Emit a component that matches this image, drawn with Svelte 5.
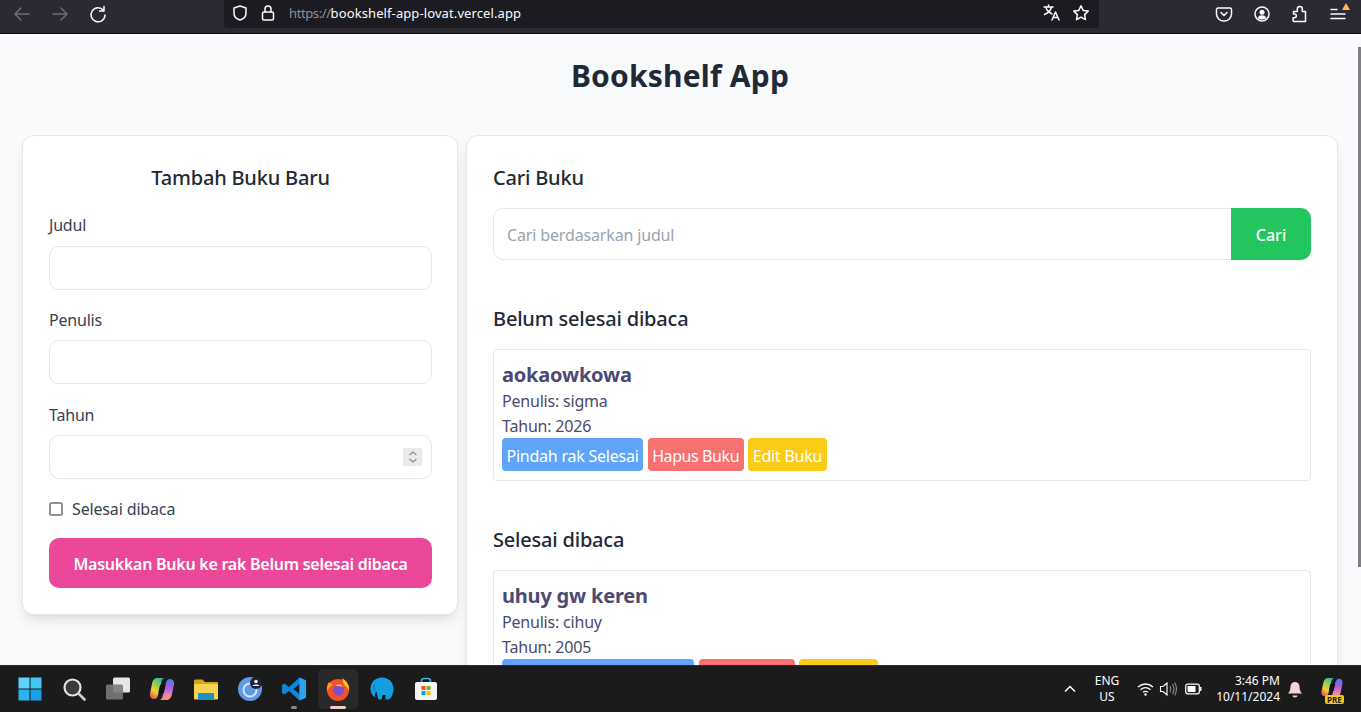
<script>
	const unread = [{ title: "aokaowkowa", author: "sigma", year: 2026, move: "Pindah rak Selesai" }];
	const done = [{ title: "uhuy gw keren", author: "cihuy", year: 2005, move: "Pindah rak Belum Selesai" }];
	const shelves = [
		{ name: "Belum selesai dibaca", books: unread },
		{ name: "Selesai dibaca", books: done },
	];
</script>

<div class="screen">
	<header class="chrome">
		<div class="nav">
			<svg class="dim" width="20" height="20" viewBox="0 0 20 20"><path d="M17 10H3M9 4l-6 6 6 6" /></svg>
			<svg class="dim" width="20" height="20" viewBox="0 0 20 20"><path d="M3 10h14M11 4l6 6-6 6" /></svg>
			<svg width="20" height="20" viewBox="0 0 20 20"><path d="M15.500 6.500A7 7 0 1 0 17 11M16 2.500v4.500h-4.500" /></svg>
		</div>
		<div class="urlbar">
			<svg width="18" height="18" viewBox="0 0 18 18"><path d="M9 2l6 2v5c0 3.500-2.500 6-6 7-3.500-1-6-3.500-6-7V4z" /></svg>
			<svg width="18" height="18" viewBox="0 0 18 18"><rect x="3.500" y="8" width="11" height="8" rx="1.500" /><path d="M6 8V5a3 3 0 0 1 6 0v3" /></svg>
			<span class="url"><span class="scheme">https://</span>bookshelf-app-lovat.vercel.app</span>
			<span class="spacer"></span>
			<svg width="20" height="20" viewBox="0 0 20 20"><path d="M2 4h9M6.500 2v2M9.500 4c-.8 3.500-3.200 6-7 7.500M4 5c1 2.500 3 4.500 6 6M10 17l3.500-8 3.500 8M11.200 14.500h4.600" /></svg>
			<svg width="18" height="18" viewBox="0 0 18 18"><path d="M9 1.800l2.200 4.600 5 .7-3.600 3.500.9 5L9 13.200l-4.500 2.400.9-5L1.800 7.100l5-.7z" /></svg>
		</div>
		<div class="tools">
			<svg width="18" height="18" viewBox="0 0 18 18"><path d="M3 3h12a1.500 1.500 0 0 1 1.500 1.500V9a7.500 7 0 0 1-15 0V4.500A1.500 1.500 0 0 1 3 3z" /><path d="M6 7.500l3 3 3-3" /></svg>
			<svg width="18" height="18" viewBox="0 0 18 18"><circle cx="9" cy="9" r="7" /><circle class="solid" cx="9" cy="7.300" r="2.500" /><path class="solid" d="M4.500 13c1-2 2.500-2.700 4.500-2.700s3.500.7 4.500 2.700c-2.500 2-6.500 2-9 0z" /></svg>
			<svg width="18" height="18" viewBox="0 0 18 18"><path d="M2.500 6.500h3.800V4a2.500 2.500 0 0 1 5 0v2.500h3.200V16.500H3a1 1 0 0 1-.9-1v-2.800h1.400a1.800 1.800 0 0 0 0-3.700H2.500z" /></svg>
			<span class="menu">
				<svg width="18" height="18" viewBox="0 0 18 18"><path d="M2 4.500h6M2 9h14M2 13.500h14" /></svg>
				<i class="badge"></i>
			</span>
		</div>
	</header>

	<div class="viewport">
		<h1>Bookshelf App</h1>
		<div class="layout">
			<section class="card form">
				<h2>Tambah Buku Baru</h2>
				<div class="field"><label for="judul">Judul</label><input id="judul" type="text" /></div>
				<div class="field"><label for="penulis">Penulis</label><input id="penulis" type="text" /></div>
				<div class="field year">
					<label for="tahun">Tahun</label>
					<div class="number">
						<input id="tahun" type="text" />
						<span class="spin">
							<svg width="10" height="14" viewBox="0 0 10 14"><path d="M1.500 5L5 2l3.500 3M1.500 9L5 12l3.500-3" /></svg>
						</span>
					</div>
				</div>
				<div class="check"><span class="box"></span><span>Selesai dibaca</span></div>
				<button class="submit">Masukkan Buku ke rak Belum selesai dibaca</button>
			</section>

			<section class="card shelves">
				<h2>Cari Buku</h2>
				<div class="search">
					<input type="text" placeholder="Cari berdasarkan judul" />
					<button>Cari</button>
				</div>
				{#each shelves as shelf}
					<h2 class="shelf-name">{shelf.name}</h2>
					{#each shelf.books as book}
						<article class="book">
							<h3>{book.title}</h3>
							<p>Penulis: {book.author}</p>
							<p>Tahun: {book.year}</p>
							<div class="actions">
								<button class="blue">{book.move}</button>
								<button class="red">Hapus Buku</button>
								<button class="yellow">Edit Buku</button>
							</div>
						</article>
					{/each}
				{/each}
			</section>
		</div>
		<div class="scrollbar"></div>
	</div>

	<footer class="taskbar">
		<svg class="defs" width="0" height="0">
			<defs>
				<linearGradient id="cop-a" x1="0.700" y1="0" x2="0.200" y2="1">
					<stop offset="0" stop-color="#2fb6a8" /><stop offset=".35" stop-color="#8fd14f" /><stop offset=".65" stop-color="#f5cf3a" /><stop offset="1" stop-color="#e8505a" />
				</linearGradient>
				<linearGradient id="cop-b" x1="0.500" y1="0" x2="0.600" y2="1">
					<stop offset="0" stop-color="#3f7fe8" /><stop offset=".45" stop-color="#b05ce0" /><stop offset=".8" stop-color="#f08aa8" /><stop offset="1" stop-color="#f59a3c" />
				</linearGradient>
			</defs>
		</svg>
		<div class="apps">
			<span class="app"><svg width="24" height="24" viewBox="0 0 24 24">
				<rect x="0.500" y="0.500" width="11" height="11" fill="#5fd3fb" /><rect x="12.500" y="0.500" width="11" height="11" fill="#45c4f6" />
				<rect x="0.500" y="12.500" width="11" height="11" fill="#2cb2f0" /><rect x="12.500" y="12.500" width="11" height="11" fill="#1a9fe8" /></svg></span>
			<span class="app"><svg width="24" height="24" viewBox="0 0 24 24"><circle cx="10.500" cy="10.500" r="8" fill="#3a3a3a" stroke="#e4e4e4" stroke-width="2.200" /><path d="M16.500 16.500l6 6" stroke="#cfcfcf" stroke-width="2.600" stroke-linecap="round" /></svg></span>
			<span class="app"><svg width="26" height="24" viewBox="0 0 26 24"><rect x="8" y="0.500" width="17" height="15" rx="1.500" fill="#e6e6e6" /><rect x="1" y="7.500" width="17" height="15" rx="1.500" fill="#7a7a7a" opacity=".9" /></svg></span>
			<span class="app"><svg width="26" height="24" viewBox="0 0 26 24">
				<path d="M8 1h8c-2 0-3 1.500-3.500 3.500L9 18c-.5 2.500-2 4-4 4-3 0-4.500-2.500-4-5.500L3 7c.6-3.500 2.500-6 5-6z" fill="url(#cop-a)" /><path d="M18 23h-8c2 0 3-1.500 3.500-3.500L17 6c.5-2.500 2-4 4-4 3 0 4.500 2.500 4 5.500L23 17c-.6 3.500-2.500 6-5 6z" fill="url(#cop-b)" /><path d="M11 8h5.500l-1.700 8H9.300z" fill="#111" /></svg></span>
			<span class="app"><svg width="24" height="24" viewBox="0 0 24 24">
				<path d="M0 4a1.500 1.500 0 0 1 1.500-1.500h7L11 5h13v17H0z" fill="#d6a514" /><rect x="0" y="7" width="24" height="15.500" rx="1" fill="#f7d352" /><rect x="4" y="16" width="16" height="6.500" fill="#1d8fc9" /></svg></span>
			<span class="app"><svg width="26" height="26" viewBox="0 0 26 26">
				<circle cx="13" cy="13" r="12" fill="#5f9be6" /><circle cx="13" cy="14" r="6.500" fill="none" stroke="#d4e6fb" stroke-width="2" /><circle cx="19" cy="7" r="6" fill="#1c2333" /><circle cx="19" cy="5.500" r="1.800" fill="#eee" /><path d="M15.500 10c.5-2 6.500-2 7 0z" fill="#eee" /></svg></span>
			<span class="app"><svg width="24" height="24" viewBox="0 0 24 24">
				<path d="M17.500.5L24 3.500v17l-6.500 3L7 14l-4.500 3.500L0 16V8l2.500-1.500L7 10zM17.500 7L11.500 12l6 5z" fill="#0f86d8" /><path d="M17.500.5L24 3.500v17l-6.500 3z" fill="#2aa5f0" /></svg>
				<i class="dot"></i></span>
			<span class="app active"><svg width="24" height="24" viewBox="0 0 24 24">
				<circle cx="12" cy="13" r="11" fill="#f4502a" /><path d="M16 1c5 3 8 8 7 13-1-3-3-5-5-6-1-3-1-5-2-7z" fill="#ffbd2e" /><path d="M3 5c-2 3-2.500 6-2 9 2-3 3-5 6-6z" fill="#ff9a25" /><circle cx="12.500" cy="13" r="5.500" fill="#7a4fd0" /><path d="M9 9c3-3 7-2 8 1-2-1-5-1-8-1z" fill="#ffb52b" /></svg>
				<i class="dash"></i></span>
			<span class="app"><svg width="24" height="24" viewBox="0 0 24 24">
				<path d="M12 .5c7 0 11.500 5 11.500 11.500 0 4.500-1.800 8.500-4.500 10.500h-3.500V18h-3l-1 4.500H8.500C7.200 20 7.500 17 6.300 14.500 5 16 4.800 18 5.200 20.500 2 18.500.5 15.500.5 12 .5 5.500 5 .5 12 .5z" fill="#14a0e0" /><path d="M5 7c-1.500 2-1.500 5 .5 7" fill="none" stroke="#0d6ea3" stroke-width="1" /></svg></span>
			<span class="app"><svg width="24" height="24" viewBox="0 0 24 24">
				<path d="M7.500 6V4a2.500 2.500 0 0 1 2.500-2.500h4A2.500 2.500 0 0 1 16.500 4v2" fill="none" stroke="#2fb4ee" stroke-width="1.600" /><rect x="1" y="5" width="22" height="18" rx="2" fill="#f4f4f4" />
				<rect x="7.500" y="9" width="4" height="4" fill="#f25022" /><rect x="12.500" y="9" width="4" height="4" fill="#7fba00" /><rect x="7.500" y="14" width="4" height="4" fill="#00a4ef" /><rect x="12.500" y="14" width="4" height="4" fill="#ffb900" /></svg></span>
		</div>
		<div class="tray">
			<svg class="t-chev" width="14" height="14" viewBox="0 0 14 14"><path d="M2 9.500L7 4.500l5 5" /></svg>
			<div class="lang"><span>ENG</span><span>US</span></div>
			<svg class="t-wifi" width="17" height="14" viewBox="0 0 17 14"><path d="M1 5c4.500-4 10.500-4 15 0M3.500 7.800c3-2.600 7-2.600 10 0M6 10.300c1.500-1.200 3.500-1.200 5 0" /><circle class="fill" cx="8.500" cy="12.500" r="1.200" /></svg>
			<svg class="t-vol" width="18" height="16" viewBox="0 0 18 16"><path d="M1.500 5.500h2.500L8 2v12l-4-3.500H1.500z" /><path class="faint" d="M11 5c1 2 1 4 0 6M13.500 3c1.700 3 1.700 7 0 10M15.800 1.500c2 4 2 9 0 13" /></svg>
			<svg class="t-bat" width="17" height="12" viewBox="0 0 17 12"><rect x="0.700" y="1.200" width="13.600" height="9.600" rx="2" /><rect class="fill" x="2.500" y="3" width="8" height="6" rx=".5" /><rect class="fill" x="15" y="4" width="1.500" height="4" /></svg>
			<div class="clock"><span>3:46 PM</span><span>10/11/2024</span></div>
			<svg class="t-bell" width="16" height="17" viewBox="0 0 16 17"><path d="M8 1a4.500 4.500 0 0 1 4.500 4.500c0 3 .8 5 2.500 7H1c1.700-2 2.500-4 2.500-7A4.500 4.500 0 0 1 8 1z" fill="#f6d4d4" /><path d="M5.500 14.500h5a2.500 2 0 0 1-5 0z" fill="#f6d4d4" /></svg>
			<span class="t-copilot">
				<svg width="24" height="21" viewBox="0 0 26 24">
					<path d="M8 1h8c-2 0-3 1.500-3.500 3.500L9 18c-.5 2.500-2 4-4 4-3 0-4.500-2.500-4-5.500L3 7c.6-3.500 2.500-6 5-6z" fill="url(#cop-a)" /><path d="M18 23h-8c2 0 3-1.500 3.500-3.500L17 6c.5-2.500 2-4 4-4 3 0 4.500 2.500 4 5.500L23 17c-.6 3.500-2.500 6-5 6z" fill="url(#cop-b)" /><path d="M11 8h5.500l-1.700 8H9.300z" fill="#111" /></svg>
				<b>PRE</b>
			</span>
		</div>
	</footer>
</div>

<style>
	:global(body) {
		margin: 0;
		overflow: hidden;
	}

	* {
		box-sizing: border-box;
	}

	.screen {
		width: 1361px;
		height: 712px;
		display: flex;
		flex-direction: column;
		overflow: hidden;
		font-family: "Noto Sans", "Open Sans", sans-serif;
	}

	/* browser toolbar */
	.chrome {
		height: 34px;
		flex: none;
		display: flex;
		align-items: flex-start;
		background: #2b2a33;
		border-bottom: 1px solid #0c0c0d;
		color: #fbfbfe;
	}

	.chrome svg {
		fill: none;
		stroke: #fbfbfe;
		stroke-width: 1.500;
		stroke-linejoin: round;
		stroke-linecap: round;
		flex: none;
	}

	.chrome svg .solid {
		fill: #fbfbfe;
		stroke: none;
	}

	.chrome svg.dim {
		stroke: #6e6d75;
	}

	.nav {
		width: 224px;
		height: 27px;
		padding-left: 12px;
		display: flex;
		align-items: center;
		gap: 18px;
	}

	.urlbar {
		width: 875px;
		height: 28px;
		padding: 0 9px 2px 7px;
		display: flex;
		align-items: center;
		gap: 10px;
		background: #1c1b22;
		border-radius: 0 0 4px 4px;
	}

	.url {
		margin-left: 2px;
		font-size: 13px;
		letter-spacing: 0.1px;
		color: #fbfbfe;
	}

	.scheme {
		letter-spacing: -0.4px;
		color: #8f8f9d;
	}

	.spacer {
		flex: 1;
	}

	.tools {
		flex: 1;
		height: 27px;
		padding: 0 14px 0 116px;
		display: flex;
		align-items: center;
		justify-content: space-between;
	}

	.menu {
		position: relative;
		display: flex;
	}

	.badge {
		position: absolute;
		top: -2px;
		right: -3px;
		width: 0;
		height: 0;
		border-left: 4px solid transparent;
		border-right: 4px solid transparent;
		border-bottom: 7px solid #ffbd4f;
	}

	/* page */
	.viewport {
		position: relative;
		flex: 1;
		min-height: 0;
		overflow: hidden;
		padding: 0 23px 0 22px;
		background: #f9fafb;
		color: #1f2937;
	}

	h1 {
		margin: 21px 0 38px;
		font-size: 30px;
		line-height: 42px;
		font-weight: 700;
		letter-spacing: 0.2px;
		text-align: center;
		color: #1f2937;
	}

	.layout {
		display: grid;
		grid-template-columns: 436px 872px;
		gap: 8px;
		align-items: start;
	}

	.card {
		background: #fff;
		border: 1px solid #e5e7eb;
		border-radius: 12px;
		padding: 27px 26px 26px;
		box-shadow: 0 8px 14px -3px rgb(0 0 0 / 0.1), 0 3px 6px -4px rgb(0 0 0 / 0.1);
	}

	h2 {
		margin: 0;
		font-size: 20px;
		line-height: 30px;
		font-weight: 500;
		letter-spacing: -0.2px;
		color: #1f2937;
	}

	.form {
		height: 480px;
		padding-right: 25px;
	}

	.form h2 {
		text-align: center;
		margin-bottom: 20px;
	}

	.field {
		margin-bottom: 18px;
	}

	.field + .field label {
		margin-bottom: 8px;
	}

	.year {
		margin-top: 19px;
	}

	label {
		display: block;
		font-size: 16px;
		line-height: 24px;
		margin-bottom: 9px;
		letter-spacing: -0.2px;
		color: #374151;
	}

	input {
		display: block;
		width: 100%;
		height: 44px;
		padding: 0 12px;
		background: #fff;
		border: 1px solid #e5e7eb;
		border-radius: 10px;
		font: inherit;
		font-size: 16px;
		outline: none;
	}

	.number {
		position: relative;
	}

	.spin {
		position: absolute;
		top: 13px;
		right: 10px;
		width: 19px;
		height: 18px;
		display: flex;
		align-items: center;
		justify-content: center;
		background: #e9eaec;
	}

	.spin svg {
		fill: none;
		stroke: #8b8b8b;
		stroke-width: 1.300;
	}

	.check {
		display: flex;
		align-items: center;
		gap: 9px;
		height: 24px;
		font-size: 16px;
		letter-spacing: -0.15px;
		color: #374151;
	}

	.box {
		width: 14px;
		height: 14px;
		border: 2px solid #909094;
		border-radius: 2.500px;
		background: #fff;
	}

	.submit {
		display: block;
		width: 100%;
		height: 50px;
		margin-top: 17px;
		padding: 2px 0 0;
		border: 0;
		border-radius: 10px;
		background: #ec4899;
		color: #fff;
		font: inherit;
		font-size: 16px;
		font-weight: 600;
		letter-spacing: -0.25px;
	}

	.shelves {
		height: 700px;
	}

	.search {
		display: flex;
		height: 52px;
		margin-top: 15px;
	}

	.search input {
		flex: 1;
		height: 52px;
		padding: 1px 13px 0;
		border-right: 0;
		border-radius: 10px 0 0 10px;
		letter-spacing: -0.15px;
	}

	.search input::placeholder {
		color: #9ca3af;
		opacity: 1;
	}

	.search button {
		width: 80px;
		padding: 2px 0 0;
		border: 0;
		border-radius: 0 10px 10px 0;
		background: #22c55e;
		color: #fff;
		font: inherit;
		font-size: 16px;
		font-weight: 500;
	}

	.shelf-name {
		margin-top: 44px;
		margin-bottom: 15px;
	}

	.book {
		height: 132px;
		padding: 10px 8px 0;
		border: 1px solid #e5e7eb;
		border-radius: 4px;
		color: #4b4a6e;
	}

	.book h3 {
		margin: 0;
		font-size: 20px;
		line-height: 29px;
		font-weight: 700;
		letter-spacing: -0.2px;
		color: #4c4a73;
	}

	.book p {
		margin: 0;
		font-size: 16px;
		line-height: 25px;
		letter-spacing: -0.2px;
	}

	.actions {
		display: flex;
		gap: 4.500px;
		margin-top: -1px;
	}

	.actions button {
		height: 33px;
		padding: 2px 4.500px 0;
		border: 0;
		border-radius: 4px;
		color: #fff;
		font: inherit;
		font-size: 16px;
		letter-spacing: -0.23px;
	}

	.blue {
		background: #60a5fa;
	}

	.actions .red {
		background: #f87171;
		letter-spacing: -0.4px;
	}

	.actions .yellow {
		background: #facc15;
	}

	.scrollbar {
		position: absolute;
		top: 13px;
		right: 0;
		width: 3px;
		height: 520px;
		background: #7f7f84;
	}

	/* windows taskbar */
	.taskbar {
		height: 47px;
		flex: none;
		display: flex;
		justify-content: space-between;
		align-items: center;
		background: #1b1b1b;
		border-top: 1px solid #2c2c2c;
		color: #fff;
	}

	.defs {
		position: absolute;
	}

	.apps {
		display: flex;
		padding-left: 8px;
	}

	.app {
		position: relative;
		width: 44px;
		height: 40px;
		display: flex;
		align-items: center;
		justify-content: center;
	}

	.app.active {
		width: 40px;
		margin: 0 2px;
		background: #292929;
		border-radius: 5px;
	}

	.dot {
		position: absolute;
		bottom: 0;
		left: 19px;
		width: 6px;
		height: 3px;
		border-radius: 2px;
		background: #8a8a8a;
	}

	.dash {
		position: absolute;
		bottom: 0;
		left: 12px;
		width: 16px;
		height: 3px;
		border-radius: 2px;
		background: #ecd0c4;
	}

	.tray {
		display: flex;
		align-items: center;
		height: 100%;
		padding-right: 18px;
		font-size: 12px;
		line-height: 16px;
	}

	.tray svg {
		flex: none;
	}

	.t-chev {
		fill: none;
		stroke: #fff;
		stroke-width: 1.500;
		margin-right: 11px;
	}

	.lang {
		display: flex;
		flex-direction: column;
		align-items: center;
		width: 38px;
		margin-right: 11px;
	}

	.t-wifi {
		fill: none;
		stroke: #fff;
		stroke-width: 1.300;
		margin-right: 5px;
	}

	.t-wifi .fill,
	.t-bat .fill {
		fill: #fff;
		stroke: none;
	}

	.t-vol {
		fill: none;
		stroke: #fff;
		stroke-width: 1.100;
		margin-right: 8px;
	}

	.t-vol .faint {
		stroke: #8d8d8d;
	}

	.t-bat {
		fill: none;
		stroke: #fff;
		stroke-width: 1.200;
		margin-right: 6px;
	}

	.clock {
		display: flex;
		flex-direction: column;
		align-items: flex-end;
		width: 72px;
	}

	.t-bell {
		margin: 0 17px 0 7px;
	}

	.t-copilot {
		position: relative;
		width: 24px;
		height: 24px;
		display: flex;
		margin-right: -1px;
	}

	.t-copilot b {
		position: absolute;
		left: 5px;
		bottom: -3px;
		padding: 0 2px;
		border-radius: 2px;
		background: #f5c518;
		color: #1b1b1b;
		font-size: 8px;
		line-height: 9px;
	}
</style>
